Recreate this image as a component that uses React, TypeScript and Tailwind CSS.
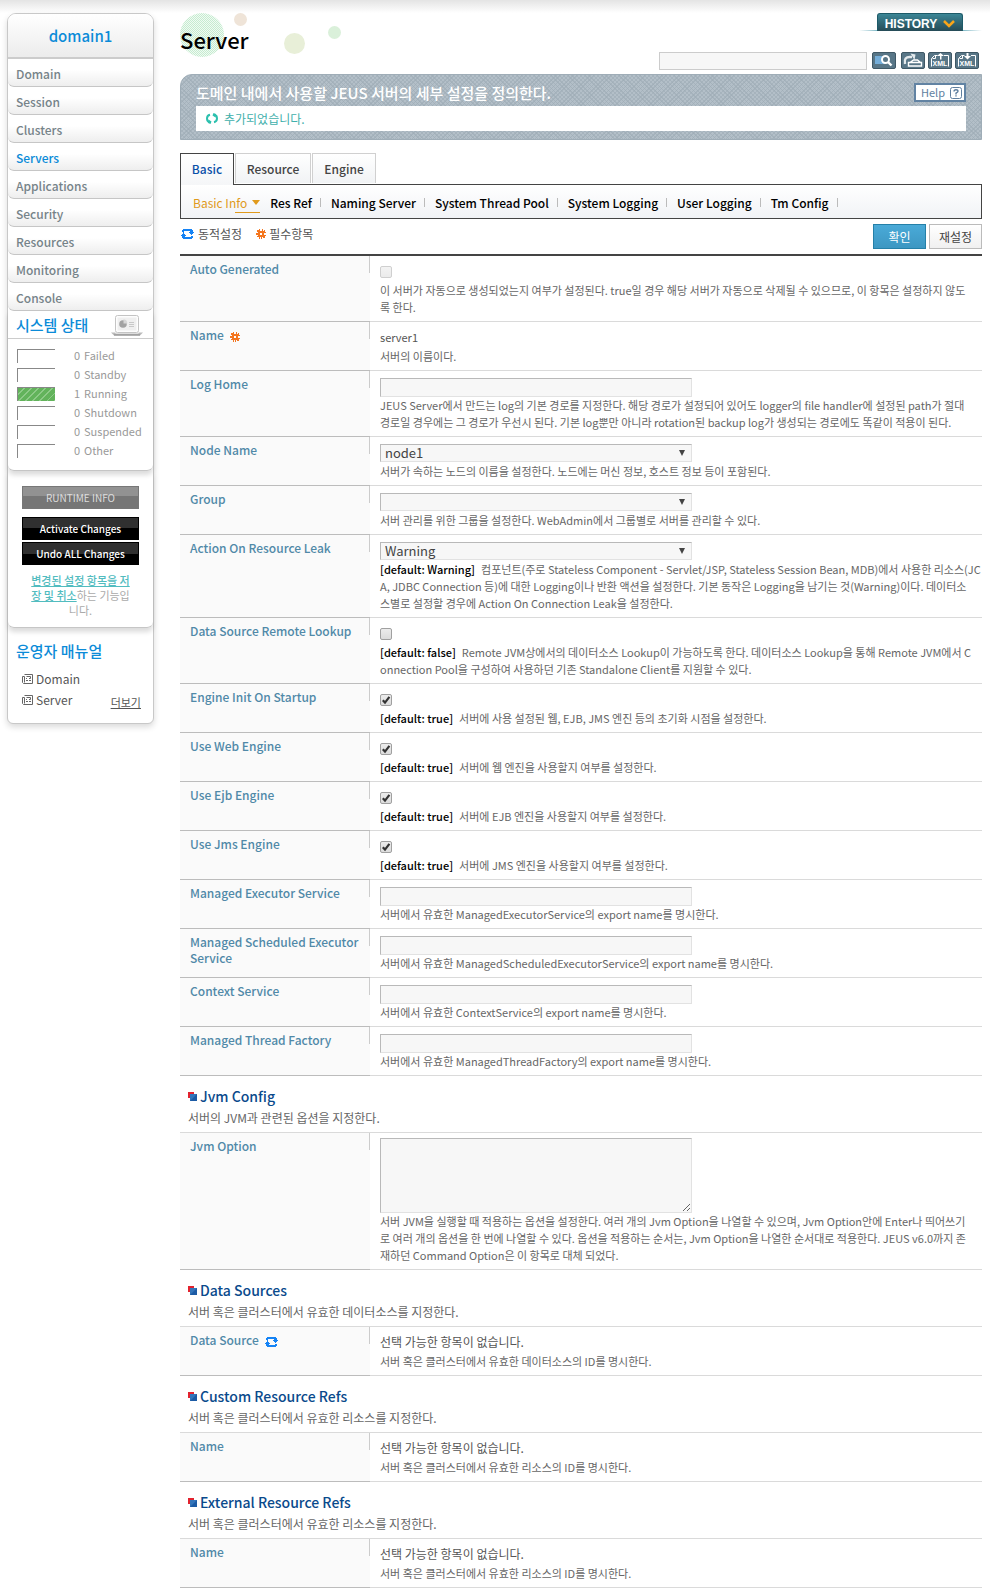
import React, { useId } from "react";

const MENU = ["Domain", "Session", "Clusters", "Servers", "Applications", "Security", "Resources", "Monitoring", "Console"];
const STATES: [number, string][] = [[0, "Failed"], [0, "Standby"], [1, "Running"], [0, "Shutdown"], [0, "Suspended"], [0, "Other"]];
const SUB_TABS = ["Res Ref", "Naming Server", "System Thread Pool", "System Logging", "User Logging", "Tm Config"];

type Kind = "text" | "select" | "check" | "area" | "static" | "empty";
type Field = {
  label: string;
  kind: Kind;
  value?: string;
  checked?: boolean;
  disabled?: boolean;
  mark?: "required" | "dynamic";
  def?: string;
  desc: string[];
};

const FIELDS: Field[] = [
  { label: "Auto Generated", kind: "check", disabled: true, desc: ["이 서버가 자동으로 생성되었는지 여부가 설정된다. true일 경우 해당 서버가 자동으로 삭제될 수 있으므로, 이 항목은 설정하지 않도", "록 한다."] },
  { label: "Name", kind: "static", value: "server1", mark: "required", desc: ["서버의 이름이다."] },
  { label: "Log Home", kind: "text", desc: ["JEUS Server에서 만드는 log의 기본 경로를 지정한다. 해당 경로가 설정되어 있어도 logger의 file handler에 설정된 path가 절대", "경로일 경우에는 그 경로가 우선시 된다. 기본 log뿐만 아니라 rotation된 backup log가 생성되는 경로에도 똑같이 적용이 된다."] },
  { label: "Node Name", kind: "select", value: "node1", desc: ["서버가 속하는 노드의 이름을 설정한다. 노드에는 머신 정보, 호스트 정보 등이 포함된다."] },
  { label: "Group", kind: "select", value: "", desc: ["서버 관리를 위한 그룹을 설정한다. WebAdmin에서 그룹별로 서버를 관리할 수 있다."] },
  { label: "Action On Resource Leak", kind: "select", value: "Warning", def: "[default: Warning]", desc: ["컴포넌트(주로 Stateless Component - Servlet/JSP, Stateless Session Bean, MDB)에서 사용한 리소스(JC", "A, JDBC Connection 등)에 대한 Logging이나 반환 액션을 설정한다. 기본 동작은 Logging을 남기는 것(Warning)이다. 데이터소", "스별로 설정할 경우에 Action On Connection Leak을 설정한다."] },
  { label: "Data Source Remote Lookup", kind: "check", def: "[default: false]", desc: ["Remote JVM상에서의 데이터소스 Lookup이 가능하도록 한다. 데이터소스 Lookup을 통해 Remote JVM에서 C", "onnection Pool을 구성하여 사용하던 기존 Standalone Client를 지원할 수 있다."] },
  { label: "Engine Init On Startup", kind: "check", checked: true, def: "[default: true]", desc: ["서버에 사용 설정된 웹, EJB, JMS 엔진 등의 초기화 시점을 설정한다."] },
  { label: "Use Web Engine", kind: "check", checked: true, def: "[default: true]", desc: ["서버에 웹 엔진을 사용할지 여부를 설정한다."] },
  { label: "Use Ejb Engine", kind: "check", checked: true, def: "[default: true]", desc: ["서버에 EJB 엔진을 사용할지 여부를 설정한다."] },
  { label: "Use Jms Engine", kind: "check", checked: true, def: "[default: true]", desc: ["서버에 JMS 엔진을 사용할지 여부를 설정한다."] },
  { label: "Managed Executor Service", kind: "text", desc: ["서버에서 유효한 ManagedExecutorService의 export name를 명시한다."] },
  { label: "Managed Scheduled Executor Service", kind: "text", desc: ["서버에서 유효한 ManagedScheduledExecutorService의 export name를 명시한다."] },
  { label: "Context Service", kind: "text", desc: ["서버에서 유효한 ContextService의 export name를 명시한다."] },
  { label: "Managed Thread Factory", kind: "text", desc: ["서버에서 유효한 ManagedThreadFactory의 export name를 명시한다."] },
];

const SECTIONS: { title: string; desc: string; field: Field }[] = [
  { title: "Jvm Config", desc: "서버의 JVM과 관련된 옵션을 지정한다.", field: { label: "Jvm Option", kind: "area", desc: ["서버 JVM을 실행할 때 적용하는 옵션을 설정한다. 여러 개의 Jvm Option을 나열할 수 있으며, Jvm Option안에 Enter나 띄어쓰기", "로 여러 개의 옵션을 한 번에 나열할 수 있다. 옵션을 적용하는 순서는, Jvm Option을 나열한 순서대로 적용한다. JEUS v6.0까지 존", "재하던 Command Option은 이 항목로 대체 되었다."] } },
  { title: "Data Sources", desc: "서버 혹은 클러스터에서 유효한 데이터소스를 지정한다.", field: { label: "Data Source", kind: "empty", mark: "dynamic", desc: ["서버 혹은 클러스터에서 유효한 데이터소스의 ID를 명시한다."] } },
  { title: "Custom Resource Refs", desc: "서버 혹은 클러스터에서 유효한 리소스를 지정한다.", field: { label: "Name", kind: "empty", desc: ["서버 혹은 클러스터에서 유효한 리소스의 ID를 명시한다."] } },
  { title: "External Resource Refs", desc: "서버 혹은 클러스터에서 유효한 리소스를 지정한다.", field: { label: "Name", kind: "empty", desc: ["서버 혹은 클러스터에서 유효한 리소스의 ID를 명시한다."] } },
];

function RequiredIcon() {
  return (
    <svg className="inline-block shrink-0" width="10" height="10" viewBox="0 0 10 10" aria-hidden="true" shapeRendering="crispEdges">
      <path
        d="M3 0H4V2H6V0H7V2H8V1H9V3H10V4H8V6H10V7H9V9H7V8H6V10H5V8H4V10H3V8H1V9H1V7H2V6H0V4H2V3H1V1H3Z"
        fill="#f4761f"
      />
      <path d="M4 4H6V6H4Z" fill="#fff" />
    </svg>
  );
}

function DynamicIcon() {
  return (
    <svg className="inline-block shrink-0" width="13" height="10" viewBox="0 0 13 10" aria-hidden="true" shapeRendering="crispEdges" fill="#1583f5">
      <path d="M2 0H11V1H12V3H13V4H12V5H11V6H10V5H9V4H8V3H9V2H3V4H2V3H1V1H2Z" />
      <path d="M11 10H2V9H1V7H0V6H1V5H2V4H3V5H4V6H5V7H4V8H10V7H12V9H11Z" />
    </svg>
  );
}

function RefreshIcon() {
  return (
    <svg width="12" height="11" viewBox="0 0 12 11" aria-hidden="true" fill="none" stroke="#2cc0ae" strokeWidth="2">
      <path d="M4 1.800Q1 2.500 1 5.500Q1 8.500 3.500 9.200M8 9.200Q11 8.500 11 5.500Q11 2.500 8.500 1.800" />
      <path d="M2.500 6.500L5.500 8.500L4.500 11L2 10ZM9.500 4.500L6.500 2.500L7.500 0L10 1Z" fill="#2cc0ae" stroke="none" />
    </svg>
  );
}

function DocIcon() {
  return (
    <svg width="11" height="10" viewBox="0 0 11 10" aria-hidden="true" fill="none" stroke="#666" strokeWidth="1">
      <path d="M2.5 0.5H10.5V9.5H1.5L0.5 8.5V2.500H2.5V8.5M4.500 2.5H8.500V4.500H7M4 6.5H6M7 6.500H9M4 4.500H5" />
    </svg>
  );
}

function SquaresIcon() {
  return (
    <svg width="9" height="9" viewBox="0 0 9 9" aria-hidden="true">
      <rect width="6" height="6" fill="#e2222e" />
      <rect x="2" y="2" width="7" height="7" fill="#1c5ba5" />
      <path d="M2 2H9L2 9Z" fill="#4a8fd0" opacity="0.5" />
    </svg>
  );
}

function Mark({ mark }: { mark?: Field["mark"] }) {
  if (!mark) return null;
  return <span className="ml-1.5 inline-block">{mark === "required" ? <RequiredIcon /> : <DynamicIcon />}</span>;
}

const BOX = "block border border-t-[#b9b9b9] border-l-[#b9b9b9] border-r-[#e2e2e2] border-b-[#e2e2e2] bg-[#f7f7f7] w-[312px]";

function Control({ field, id }: { field: Field; id: string }) {
  switch (field.kind) {
    case "text":
      return <input id={id} type="text" className={`${BOX} h-[19px] px-1 text-[13px]`} />;
    case "select":
      return (
        <div className="relative h-[19px] w-[312px]">
          <select id={id} defaultValue={field.value} className={`${BOX} h-[18px] appearance-none px-1 text-[13px] leading-4 text-[#444]`}>
            <option value={field.value}>{field.value}</option>
          </select>
          <svg className="pointer-events-none absolute top-1.5 right-[7px]" width="6" height="6" viewBox="0 0 6 6" aria-hidden="true">
            <path d="M0 0H6L3 6Z" fill="#444" />
          </svg>
        </div>
      );
    case "check":
      return (
        <div className="flex h-[19px] items-start pt-[3px]">
          <span className="relative block size-3">
            <input
              id={id}
              type="checkbox"
              defaultChecked={field.checked}
              disabled={field.disabled}
              className="peer block size-3 appearance-none rounded-[2px] border border-[#a0a0a0] bg-linear-to-b from-[#ececec] to-[#dcdcdc] disabled:border-[#cfcfcf] disabled:from-[#f3f3f3] disabled:to-[#ebebeb]"
            />
            <svg className="pointer-events-none absolute inset-0 hidden peer-checked:block" width="12" height="12" viewBox="0 0 12 12" aria-hidden="true">
              <path d="M2.8 6.2L5 8.6L9.4 2.8" fill="none" stroke="#333" strokeWidth="2.2" />
            </svg>
          </span>
        </div>
      );
    case "area":
      return <textarea id={id} className={`${BOX} h-[75px] px-1 text-[13px]`} />;
    case "static":
      return <output id={id} className="block h-[19px] text-[11px] leading-4 text-[#555]">{field.value}</output>;
    default:
      return <output id={id} className="block h-[19px] text-xs leading-4 text-[#555]">선택 가능한 항목이 없습니다.</output>;
  }
}

function Row({ field }: { field: Field }) {
  const id = useId();
  return (
    <div className="flex">
      <div className="flex w-[190px] shrink-0 items-start border-b border-[#bcbcbc] bg-[#fafafa]">
        <label htmlFor={id} className="flex-1 pt-[5px] pl-2.5 text-xs leading-4 font-medium text-[#5089a8]">
          {field.label}
          <Mark mark={field.mark} />
        </label>
        <span className="h-[17px] w-px bg-[#ccc]" />
      </div>
      <div className={`min-w-0 flex-1 border-b border-[#dadada] pb-[5px] pl-2.5 ${field.kind === "area" ? "pt-[5px]" : "pt-[7px]"}`}>
        <Control field={field} id={id} />
        <p className="text-[11px] leading-[17px] whitespace-nowrap text-[#666]">
          {field.desc.map((line, i) => (
            <span key={i} className="block">
              {i === 0 && field.def && <span className="mr-1.5 font-medium text-black">{field.def}</span>}
              {line}
            </span>
          ))}
        </p>
      </div>
    </div>
  );
}

function Sidebar() {
  return (
    <aside className="mt-[13px] mb-6 ml-[7px] w-[147px] shrink-0 self-start rounded-[9px] rounded-b-md border border-[#c8c8c8] bg-white shadow-[0_3px_6px_rgba(0,0,0,0.15)]">
      <h2 className="flex h-[45px] items-center justify-center rounded-t-lg border-b-2 border-[#ccc] bg-linear-to-b from-white to-[#ececec] text-[15px] font-medium text-[#0b8bd8]">domain1</h2>
      <nav>
        {MENU.map((m) => (
          <a
            key={m}
            href={`#${m.toLowerCase()}`}
            className={`flex h-7 items-center rounded-b-md border-b border-[#c6c6c6] bg-linear-to-b from-white from-40% to-[#eee] pt-0.5 pl-2 text-xs font-medium ${m === "Servers" ? "text-[#0b8bd8]" : "text-[#768389]"}`}
          >
            {m}
          </a>
        ))}
      </nav>
      <section className="rounded-b-md border-b border-[#c6c6c6] shadow-[0_4px_5px_rgba(0,0,0,0.14)]">
        <div className="flex h-7 items-center justify-between border-b border-[#ccc] pr-2.5 pl-2">
          <h3 className="text-[15px] font-medium text-[#0b8bd8]">시스템 상태</h3>
          <svg width="32" height="22" viewBox="0 0 32 22" aria-hidden="true">
            <rect x="4.5" y="1.5" width="23" height="17" rx="2" fill="#fdfdfd" stroke="#c4c4c4" />
            <rect x="6.500" y="3.500" width="19" height="13" fill="#efefef" />
            <circle cx="12" cy="10" r="3.800" fill="#a2a2a2" />
            <path d="M12.500 9.500V5.200A4.300 4.300 0 0 1 16.300 9.500Z" fill="#d6d6d6" />
            <path d="M18 8.500H23M18 10.500H23M18 12.500H23" stroke="#c8c8c8" />
            <path d="M0 18.500H4.500V19.500H27.500V18.500H32L29 21.500H3Z" fill="#bbb" />
            <path d="M3 21H29" stroke="#888" />
          </svg>
        </div>
        <ul className="pt-[7px] pb-2.5 pl-[9px]">
          {STATES.map(([n, name]) => (
            <li key={name} className="flex h-[19px] items-center text-[11px] text-[#999]">
              <svg width="38" height="14" viewBox="0 0 38 14" className={n ? "border-t border-l border-[#888] bg-[repeating-linear-gradient(135deg,#62b35b_0_4px,#8dca87_4px_5px)]" : "border-t border-l border-[#888]"} aria-hidden="true" />
              <span className="w-[25px] text-right">{n}</span>
              <span className="pl-1">{name}</span>
            </li>
          ))}
        </ul>
      </section>
      <section className="rounded-b-md border-b border-[#c6c6c6] px-3.5 pt-[15px] pb-[9px] shadow-[0_4px_5px_rgba(0,0,0,0.14)]">
        <button className="mb-2 block h-[23px] w-full border border-[#777] bg-linear-to-b from-[#929292] from-45% to-[#767676] to-45% text-[10px] text-[#ddd]">RUNTIME INFO</button>
        <button className="mb-0.5 block h-[23px] w-full border border-black bg-linear-to-b from-[#303030] from-50% to-black to-50% text-[10px] font-medium text-white">Activate Changes</button>
        <button className="block h-[23px] w-full border border-black bg-linear-to-b from-[#303030] from-50% to-black to-50% text-[10px] font-medium text-white">Undo ALL Changes</button>
        <p className="mt-2 text-center text-[11px] leading-[15px] whitespace-nowrap text-[#aaa]">
          <a href="#changes" className="font-medium text-[#52bcbf] underline">변경된 설정 항목을 저<br />장 및 취소</a>하는 기능입<br />니다.
        </p>
      </section>
      <section className="pt-[13px] pr-3 pb-3 pl-2">
        <h3 className="text-[15px] leading-5 font-medium text-[#0b8bd8]">운영자 매뉴얼</h3>
        <ul className="mt-[7px] pl-1.5 text-xs text-[#555]">
          <li className="flex h-[21px] items-center">
            <a href="#manual-domain" className="flex items-center gap-[3px]"><DocIcon />Domain</a>
          </li>
          <li className="flex h-[22px] items-center justify-between">
            <a href="#manual-server" className="flex items-center gap-[3px]"><DocIcon />Server</a>
            <a href="#more" className="pt-1 text-[11px] underline">더보기</a>
          </li>
        </ul>
      </section>
    </aside>
  );
}

function ToolButton({ label, children }: { label: string; children: React.ReactNode }) {
  return (
    <button aria-label={label} className="block h-[17px] w-6 rounded-[2px] border border-[#3f5866] bg-[#587687]">
      <svg width="22" height="15" viewBox="0 0 22 15" aria-hidden="true" fill="none" stroke="#fff">{children}</svg>
    </button>
  );
}

function XmlGlyph() {
  return (
    <>
      <path d="M2.500 13.500V5.500L5.500 2.500H8.500M15 2.500H19.500V13.500" />
      <path d="M3.500 5.500H6.500V2.500" />
      <text x="11" y="13" textAnchor="middle" fill="#fff" stroke="none" className="font-['Liberation_Sans',sans-serif] text-[7px] font-bold">XML</text>
    </>
  );
}

function Header() {
  return (
    <header className="relative flex h-[74px] justify-between">
      <svg className="absolute top-3 left-0" width="165" height="46" viewBox="0 0 165 46" aria-hidden="true">
        <defs>
          <pattern id="dots" width="2" height="2" patternUnits="userSpaceOnUse">
            <rect width="2" height="2" fill="#f0fbf3" />
            <rect width="1" height="1" fill="#c6ebd0" />
            <rect x="1" y="1" width="1" height="1" fill="#c6ebd0" />
          </pattern>
        </defs>
        <circle cx="22" cy="23" r="22" fill="url(#dots)" />
        <circle cx="60.500" cy="7.500" r="6.500" fill="#efe4d8" />
        <circle cx="114.500" cy="31.500" r="10.500" fill="#e8efd8" />
        <circle cx="154.500" cy="20.500" r="6.500" fill="#daf0da" />
      </svg>
      <h1 className="relative pt-[23px] text-[22px] leading-8 font-medium text-black">Server</h1>
      <div className="flex flex-col items-end">
        <div className="mt-[13px] flex h-[18px] items-end">
          <span className="h-px w-[18px] bg-linear-to-r from-white to-[#7fb9c6]" />
          <button className="flex h-[18px] w-[86px] items-center justify-center gap-1.5 rounded-t-[3px] border border-b-0 border-[#1d5a68] bg-linear-to-b from-[#3b8696] to-[#264b57] pt-0.5 font-['Liberation_Sans',sans-serif] text-[12px] font-bold text-white">
            HISTORY
            <svg width="12" height="8" viewBox="0 0 12 8" aria-hidden="true"><path d="M1 1L6 6L11 1" fill="none" stroke="#f9a51a" strokeWidth="2.500" /></svg>
          </button>
          <span className="h-px w-[19px] bg-linear-to-r from-[#7fb9c6] to-white" />
        </div>
        <form className="mt-[21px] mr-[3px] flex items-start" onSubmit={(e) => e.preventDefault()}>
          <input type="text" aria-label="검색" className="h-[18px] w-[208px] border border-[#ccc] bg-[#f7f7f7] px-1 text-xs" />
          <div className="ml-[5px] flex gap-[3px]">
            <div className="mr-0.5">
              <ToolButton label="검색 실행">
                <rect x="2" y="3" width="10" height="8" fill="#74add8" stroke="none" />
                <circle cx="12.500" cy="6.500" r="3.500" strokeWidth="2" fill="#587687" />
                <path d="M15 9L18.500 12.500" strokeWidth="2.400" />
              </ToolButton>
            </div>
            <ToolButton label="다시 읽기">
              <path d="M3 11Q1.500 3.500 8.500 4H10" strokeWidth="2.400" stroke="#e3e9ec" />
              <path d="M8.500 0.500L13.500 1.500L12.500 7Z" fill="#e3e9ec" stroke="none" />
              <path d="M6.500 9.500H19.500V13H6.500ZM8 9.500L11.500 7H15.500L18.500 9.500" strokeWidth="1.400" />
            </ToolButton>
            <ToolButton label="XML 내보내기">
              <XmlGlyph />
              <path d="M11 6.500V3H8L11.500 0L15 3H12.500V6.500Z" fill="#fff" stroke="none" />
            </ToolButton>
            <ToolButton label="XML 가져오기">
              <XmlGlyph />
              <path d="M10.500 0V3H8L11.500 6.500L15 3H12.500V0Z" fill="#fff" stroke="none" />
            </ToolButton>
          </div>
        </form>
      </div>
    </header>
  );
}

function Banner() {
  return (
    <section className="h-[66px] rounded-tl-xl border border-[#9fadb7] bg-[#b3bfc8] bg-[repeating-linear-gradient(45deg,#9dabb599_0_1px,transparent_1px_3px),repeating-linear-gradient(-45deg,#9dabb599_0_1px,transparent_1px_3px)] px-[15px] pt-2">
      <div className="flex h-[23px] items-start justify-between">
        <h2 className="text-[15px] leading-5 font-medium text-white">도메인 내에서 사용할 JEUS 서버의 세부 설정을 정의한다.</h2>
        <button className="flex h-[19px] w-[52px] items-center justify-between border-2 border-[#6283a3] bg-white pr-0.5 pl-[5px] text-[11px] text-[#5f7f9f]">
          Help
          <svg width="12" height="12" viewBox="0 0 12 12" aria-hidden="true" fill="none" stroke="#5f7f9f">
            <rect x="0.500" y="0.500" width="11" height="11" rx="2" />
            <path d="M4 4.500Q4 2.700 6 2.700Q8 2.700 8 4.300Q8 5.300 6 6.200V7.400M6 8.300V9.600" strokeWidth="1.400" />
          </svg>
        </button>
      </div>
      <p className="flex h-[25px] items-center gap-1.5 bg-white pl-2.5 text-xs text-[#3fb0ac]">
        <RefreshIcon />
        추가되었습니다.
      </p>
    </section>
  );
}

function Tabs() {
  return (
    <nav className="mt-[13px]">
      <div className="relative z-10 -mb-px flex items-start gap-px text-xs font-medium text-[#444]">
        <a href="#basic" className="flex h-8 w-[54px] items-center justify-center border border-b-0 border-[#444] bg-linear-to-b from-white to-[#f5f6f8] pb-0.5 text-[#0a50a8]">Basic</a>
        <a href="#resource" className="flex h-[30px] w-[76px] items-center justify-center border border-b-0 border-[#d0d0d0] bg-linear-to-b from-white to-[#f1f3f5]">Resource</a>
        <a href="#engine" className="flex h-[30px] w-16 items-center justify-center border border-b-0 border-[#d0d0d0] bg-linear-to-b from-white to-[#f1f3f5]">Engine</a>
      </div>
      <div className="flex h-[35px] items-center border border-[#444] bg-linear-to-b from-white to-[#f1f3f6] pt-0.5 pl-3 text-xs font-medium whitespace-nowrap text-black">
        <a href="#basic-info" className="relative mr-2.5 flex items-center gap-[5px] font-normal text-[#e09a1c]">
          Basic Info
          <svg width="8" height="5" viewBox="0 0 8 5" aria-hidden="true"><path d="M0 0H8L4 5Z" fill="#e09a1c" /></svg>
          <span className="absolute right-0 -bottom-0.5 h-px w-[25px] bg-[#e09a1c]" />
        </a>
        {SUB_TABS.map((t) => (
          <React.Fragment key={t}>
            <a href={`#${t.replace(/ /g, "-").toLowerCase()}`}>{t}</a>
            <span className="mr-2.5 ml-2 h-[9px] w-px bg-[#bbb]" />
          </React.Fragment>
        ))}
      </div>
    </nav>
  );
}

export default function App() {
  return (
    <div className="flex bg-white bg-linear-to-b from-[#e4e4e4] from-0% to-white to-[13px] font-['Noto_Sans_CJK_KR',sans-serif] text-xs">
      <Sidebar />
      <main className="mr-2 ml-[26px] min-w-0 flex-1 pb-2">
        <Header />
        <Banner />
        <Tabs />
        <form onSubmit={(e) => e.preventDefault()}>
          <div className="flex h-[35px] items-center justify-between">
            <div className="flex items-center pb-1.5 pl-px text-xs text-[#555]">
              <DynamicIcon />
              <span className="ml-1">동적설정</span>
              <span className="mr-[3px] ml-3.5 flex"><RequiredIcon /></span>
              필수항목
            </div>
            <div className="flex gap-[3px]">
              <button type="submit" className="h-[25px] w-[53px] border border-[#2580a8] bg-linear-to-b from-[#4aaad8] to-[#3d97c2] text-xs text-white">확인</button>
              <button type="reset" className="h-[25px] w-[53px] border border-[#bbb] bg-linear-to-b from-white to-[#f0f0f0] text-xs text-[#444]">재설정</button>
            </div>
          </div>
          <div className="border-t-2 border-[#444]">
            {FIELDS.map((f) => <Row key={f.label} field={f} />)}
          </div>
          {SECTIONS.map((s) => (
            <section key={s.title}>
              <div className="h-[57px] border-b border-[#dadada] pt-[9px] pl-2">
                <h3 className="flex items-center gap-[3px] text-sm leading-[22px] font-medium text-[#0a4a8c]">
                  <SquaresIcon />
                  {s.title}
                </h3>
                <p className="pt-px text-xs leading-5 text-[#666]">{s.desc}</p>
              </div>
              <Row field={s.field} />
            </section>
          ))}
        </form>
      </main>
    </div>
  );
}
